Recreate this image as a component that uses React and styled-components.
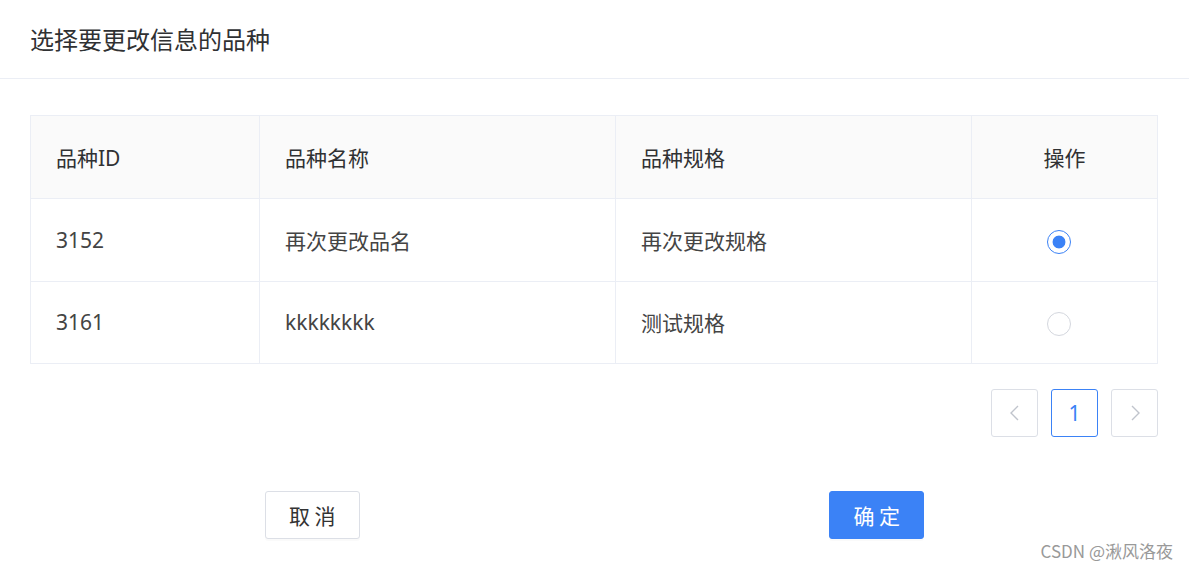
import React, { useState } from "react"
import styled, { createGlobalStyle } from "styled-components"

const GlobalStyle = createGlobalStyle`
  html, body {
    margin: 0;
    padding: 0;
    background: #ffffff;
  }
  body {
    font-family: "Noto Sans", "Noto Sans CJK SC", sans-serif;
    color: #333333;
  }
`

const rows = [
  { id: "3152", name: "再次更改品名", spec: "再次更改规格" },
  { id: "3161", name: "kkkkkkkk", spec: "测试规格" },
]

export default function App() {
  const [picked, setPicked] = useState("3152")

  return (
    <Dialog>
      <GlobalStyle />
      <Header>
        <Title>选择要更改信息的品种</Title>
      </Header>

      <Body>
        <Table>
          <colgroup>
            <col style={{ width: 229 }} />
            <col style={{ width: 356 }} />
            <col style={{ width: 356 }} />
            <col style={{ width: 186 }} />
          </colgroup>
          <thead>
            <tr>
              <Th>品种ID</Th>
              <Th>品种名称</Th>
              <Th>品种规格</Th>
              <Th center>操作</Th>
            </tr>
          </thead>
          <tbody>
            {rows.map((r) => (
              <tr key={r.id}>
                <Td>{r.id}</Td>
                <Td>{r.name}</Td>
                <Td>{r.spec}</Td>
                <Td center>
                  <Radio checked={picked === r.id} onClick={() => setPicked(r.id)} />
                </Td>
              </tr>
            ))}
          </tbody>
        </Table>

        <Pager>
          <PageBtn>
            <svg width="14" height="16" viewBox="0 0 14 16">
              <path d="M10 1 L3 8 L10 15" fill="none" stroke="#c0c4cc" strokeWidth="1.4" />
            </svg>
          </PageBtn>
          <PageBtn active>1</PageBtn>
          <PageBtn>
            <svg width="14" height="16" viewBox="0 0 14 16">
              <path d="M4 1 L11 8 L4 15" fill="none" stroke="#c0c4cc" strokeWidth="1.4" />
            </svg>
          </PageBtn>
        </Pager>
      </Body>

      <Footer>
        <Button>取 消</Button>
        <Button primary>确 定</Button>
      </Footer>

      <Watermark>CSDN @湫风洛夜</Watermark>
    </Dialog>
  )
}

const Dialog = styled.div`
  position: relative;
  width: 1189px;
  height: 571px;
  background: #ffffff;
  overflow: hidden;
`

const Header = styled.div`
  height: 78px;
  display: flex;
  align-items: center;
  padding: 0 30px;
  border-bottom: 1px solid #ebeef5;
`

const Title = styled.div`
  font-family: "Noto Sans CJK SC", sans-serif;
  font-size: 24px;
  color: #303133;
  margin-top: -2px;
`

const Body = styled.div`
  padding: 36px 30px 0;
`

const Table = styled.table`
  width: 1127px;
  table-layout: fixed;
  border-collapse: collapse;
  border: 1px solid #ebeef5;
  font-size: 21px;
`

const Th = styled.th`
  height: 82px;
  padding: 0 25px;
  background: #fafafa;
  border: 1px solid #ebeef5;
  font-weight: 400;
  color: #303133;
  text-align: ${(p) => (p.center ? "center" : "left")};
`

const Td = styled.td`
  height: 81.5px;
  padding: 0 25px;
  border: 1px solid #ebeef5;
  color: #444444;
  text-align: ${(p) => (p.center ? "center" : "left")};
  vertical-align: middle;
`

const Radio = styled.span`
  display: inline-block;
  box-sizing: border-box;
  width: 24px;
  height: 24px;
  margin-right: 12px;
  border-radius: 50%;
  vertical-align: middle;
  cursor: pointer;
  border: 1px solid ${(p) => (p.checked ? "#3b82f6" : "#d4d7de")};
  background: ${(p) =>
    p.checked
      ? "radial-gradient(circle, #3b82f6 0 6px, #ffffff 6.8px)"
      : "#ffffff"};
`

const Pager = styled.div`
  display: flex;
  justify-content: flex-end;
  gap: 13px;
  margin-top: 25px;
  padding-right: 1px;
`

const PageBtn = styled.div`
  box-sizing: border-box;
  width: 47px;
  height: 48px;
  display: flex;
  align-items: center;
  justify-content: center;
  border: 1px solid ${(p) => (p.active ? "#3b82f6" : "#dcdfe6")};
  border-radius: 3px;
  color: #3b82f6;
  font-size: 21px;
  background: #ffffff;
`

const Footer = styled.div`
  display: flex;
  justify-content: space-around;
  padding: 54px 30px 0;
`

const Button = styled.button`
  box-sizing: border-box;
  width: 95px;
  height: 48px;
  border-radius: 3px;
  font-family: "Noto Sans CJK SC", sans-serif;
  font-size: 21px;
  border: 1px solid ${(p) => (p.primary ? "#3b82f6" : "#dcdfe6")};
  background: ${(p) => (p.primary ? "#3b82f6" : "#ffffff")};
  color: ${(p) => (p.primary ? "#ffffff" : "#333333")};
  box-shadow: 0 2px 0 rgba(0, 0, 0, 0.02);
  cursor: pointer;
`

const Watermark = styled.div`
  position: absolute;
  right: 16px;
  bottom: 8px;
  font-family: "Noto Sans CJK SC", sans-serif;
  font-size: 17px;
  color: #999999;
  text-shadow: 0 0 1px rgba(255, 255, 255, 0.8);
`
